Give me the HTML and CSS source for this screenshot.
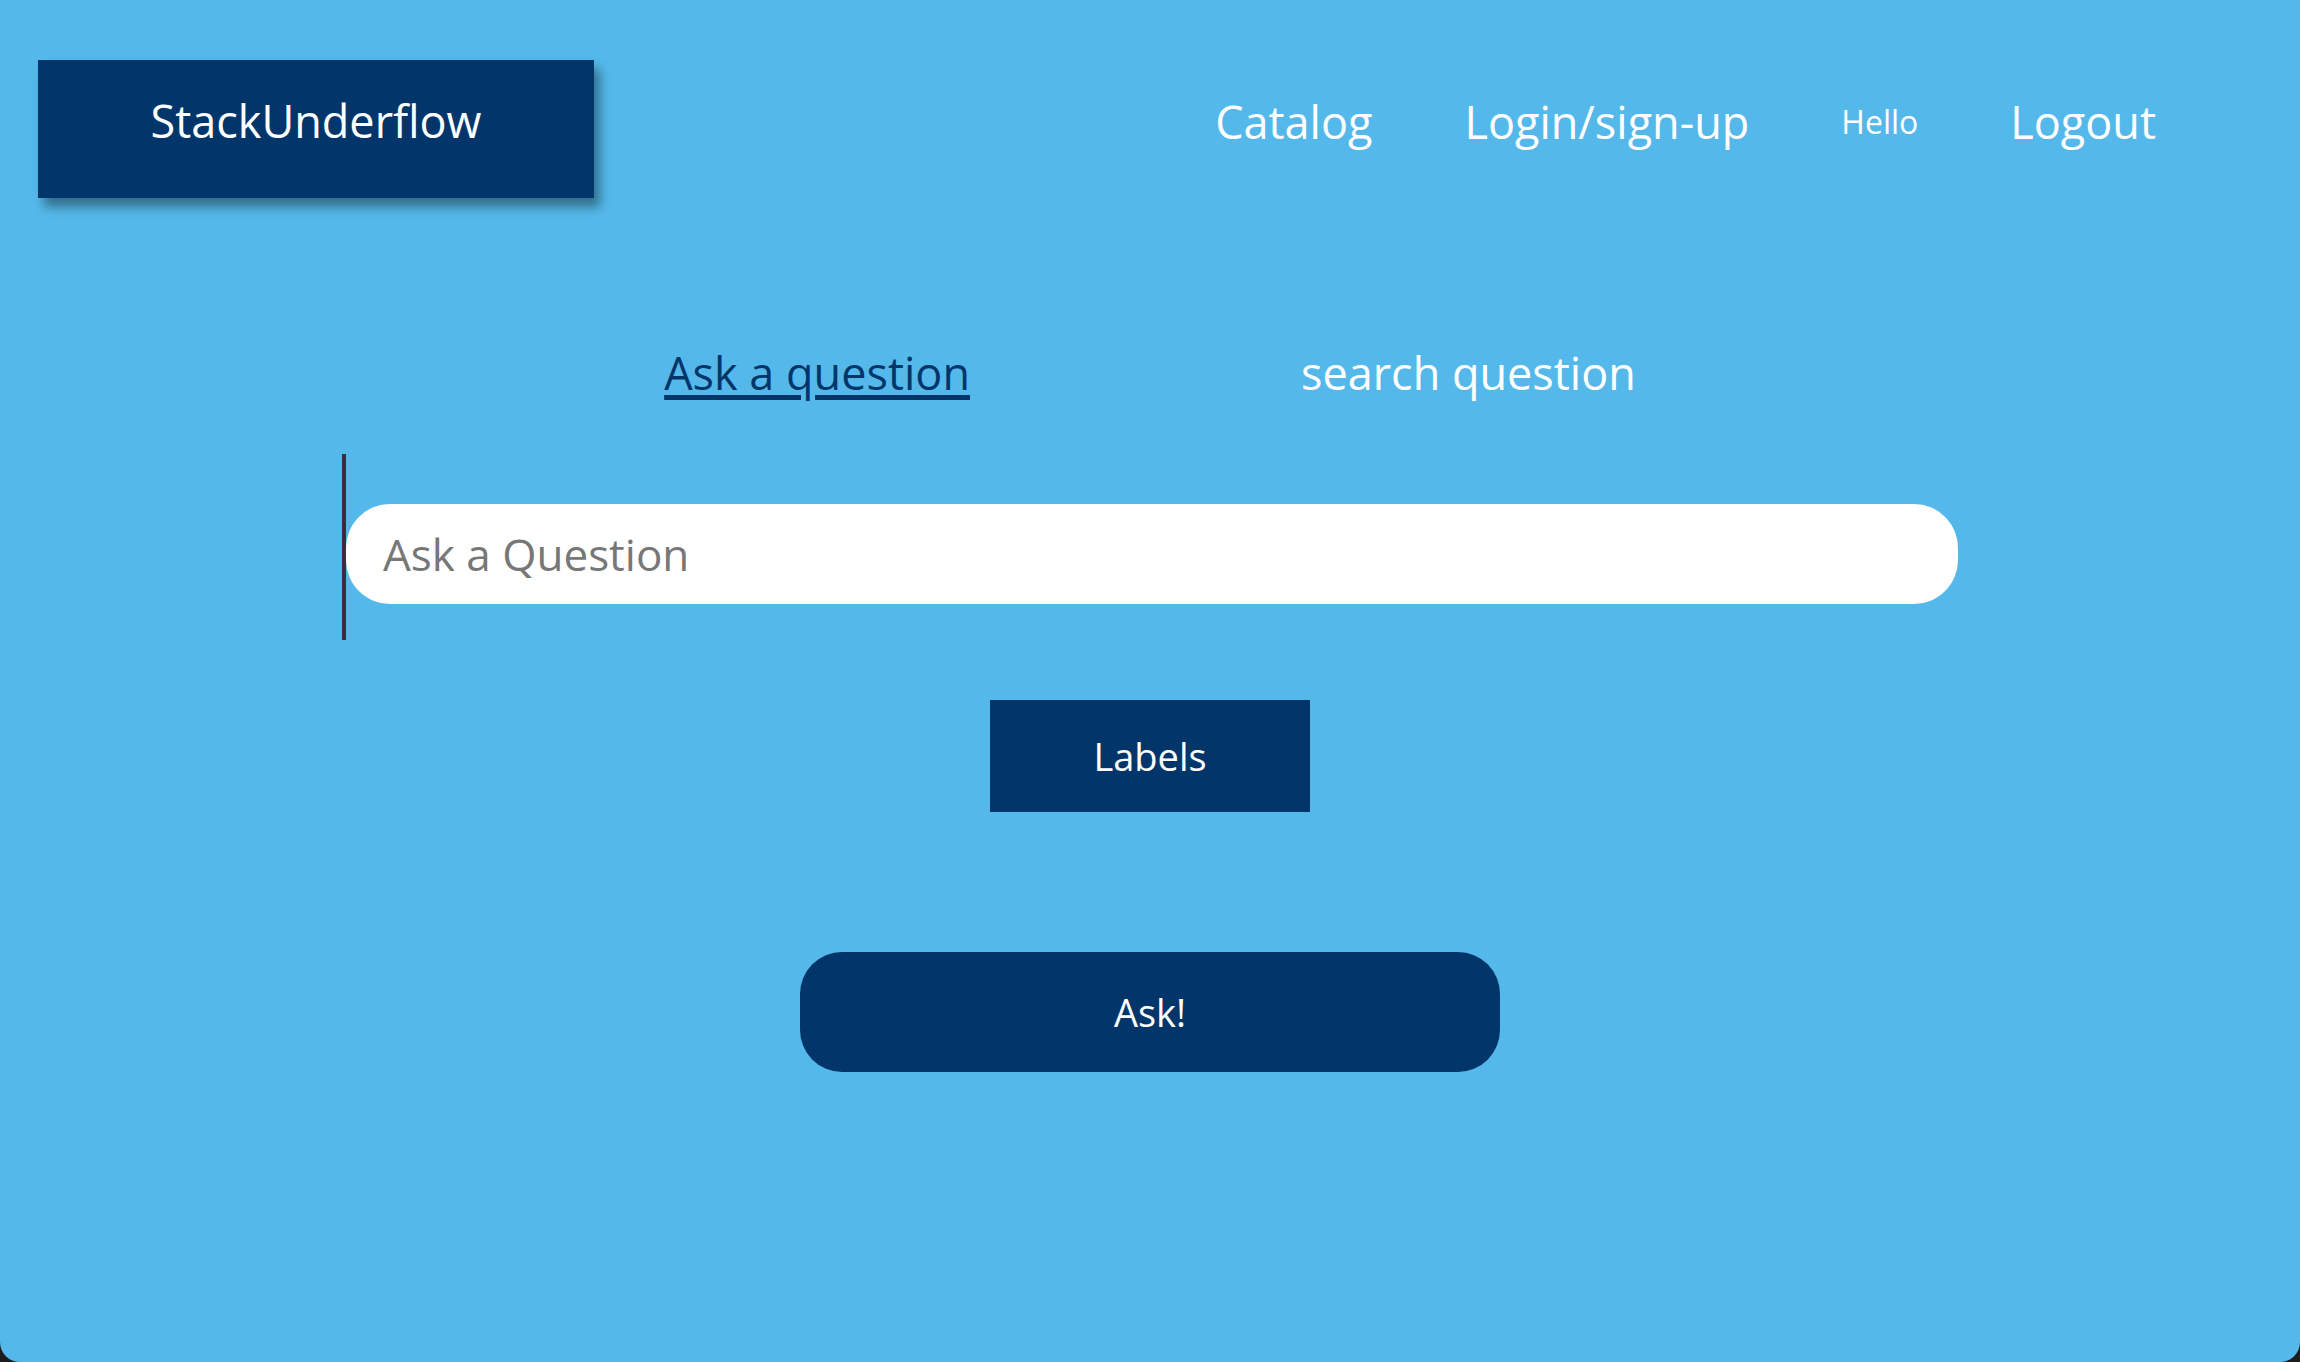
FILE: index.html
```html
<!DOCTYPE html>
<html lang="en">
<head>
<meta charset="utf-8">
<title>StackUnderflow</title>
<link rel="stylesheet" href="styles.css">
</head>
<body>
<div class="page">
  <header class="header">
    <div class="logo">StackUnderflow</div>
    <nav class="nav">
      <a class="nav-link" href="#">Catalog</a>
      <a class="nav-link" href="#">Login/sign-up</a>
      <span class="nav-hello">Hello</span>
      <a class="nav-link" href="#">Logout</a>
    </nav>
  </header>
  <main class="main">
    <div class="tabs">
      <a class="tab tab-active" href="#">Ask a question</a>
      <a class="tab" href="#">search question</a>
    </div>
    <div class="ask-field">
      <input class="ask-input" type="text" placeholder="Ask a Question" autofocus>
    </div>
    <button class="labels-btn" type="button">Labels</button>
    <button class="ask-btn" type="button">Ask!</button>
  </main>
</div>
</body>
</html>
```
FILE: styles.css
```css
html {
  background: #1d1d1d;
}
body {
  margin: 0;
  font-family: "Open Sans", "Noto Sans", sans-serif;
}
.page {
  min-height: 1362px;
  box-sizing: border-box;
  background: #54b9ea;
  border-radius: 0 0 20px 20px;
  overflow: hidden;
}
.header {
  display: flex;
  align-items: center;
  padding: 60px 144px 0 38px;
}
.logo {
  width: 556px;
  height: 138px;
  box-sizing: border-box;
  padding-bottom: 18px;
  display: flex;
  align-items: center;
  justify-content: center;
  background: #02366a;
  color: #fff;
  font-size: 45px;
  box-shadow: 6px 9px 10px rgba(0, 0, 0, 0.4);
}
.nav {
  margin-left: auto;
  display: flex;
  align-items: center;
  gap: 92px;
  padding-bottom: 16px;
}
.nav-link {
  color: #fff;
  text-decoration: none;
  font-size: 45px;
}
.nav-hello {
  color: #fff;
  font-size: 32px;
}
.main {
  display: flex;
  flex-direction: column;
  align-items: center;
}
.tabs {
  display: flex;
  gap: 331px;
  margin-top: 152px;
  line-height: 1;
}
.tab {
  color: #fff;
  text-decoration: none;
  font-size: 45px;
}
.tab-active {
  color: #02366a;
  text-decoration: underline;
  text-decoration-thickness: 5px;
  text-underline-offset: 5px;
}
.ask-field {
  width: 1616px;
  box-sizing: border-box;
  margin-top: 59px;
  border-left: 4px solid #3d2b3e;
  padding: 50px 0 36px;
}
.ask-input {
  display: block;
  width: 100%;
  height: 100px;
  box-sizing: border-box;
  border: none;
  outline: none;
  border-radius: 44px;
  background: #fff;
  padding: 0 0 0 37px;
  font-family: "Open Sans", "Noto Sans", sans-serif;
  font-size: 44px;
  color: #333;
  caret-color: #000;
}
.ask-input::placeholder {
  color: #777;
}
.labels-btn {
  margin-top: 60px;
  width: 320px;
  height: 112px;
  border: none;
  background: #02366a;
  color: #fff;
  font-family: "Open Sans", "Noto Sans", sans-serif;
  font-size: 38px;
}
.ask-btn {
  margin-top: 140px;
  width: 700px;
  height: 120px;
  border: none;
  border-radius: 42px;
  background: #02366a;
  color: #fff;
  font-family: "Open Sans", "Noto Sans", sans-serif;
  font-size: 38px;
}
```
